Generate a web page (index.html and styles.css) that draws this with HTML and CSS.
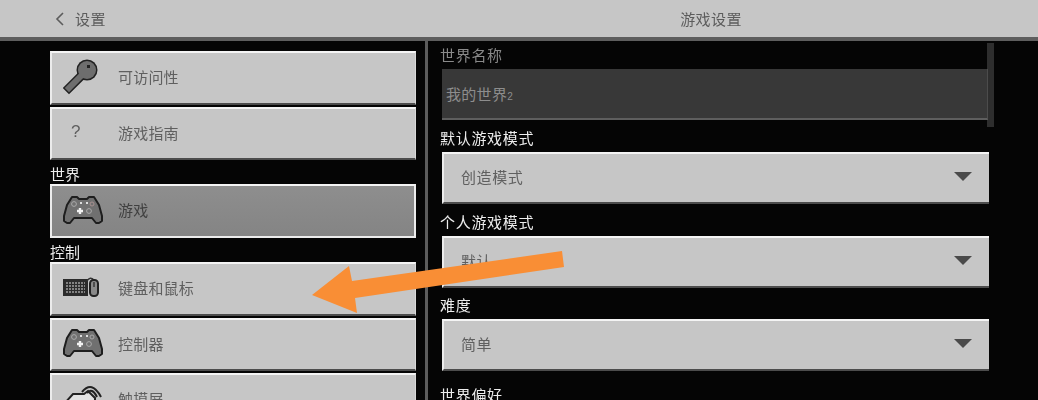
FILE: index.html
```html
<!DOCTYPE html>
<html lang="zh-CN">
<head>
<meta charset="utf-8">
<title>游戏设置</title>
<link rel="stylesheet" href="styles.css">
</head>
<body>
<div class="app">
  <header class="topbar">
    <div class="back">
      <svg class="chevron" width="10" height="16" viewBox="0 0 10 16"><path d="M8 2 L2 8 L8 14" fill="none" stroke="#5c5c5c" stroke-width="1.6"/></svg>
      <span>设置</span>
    </div>
    <div class="title">游戏设置</div>
  </header>
  <main class="content">
    <nav class="sidebar">
      <button class="item">
        <span class="slot">
          <svg width="40" height="40" viewBox="0 0 40 40">
            <path d="M17 20 L6 31" stroke="#222" stroke-width="9" stroke-linecap="square"/>
            <circle cx="24" cy="13" r="10.5" fill="#222"/>
            <path d="M17 20 L6 31" stroke="#6e6e6e" stroke-width="6" stroke-linecap="square"/>
            <circle cx="24" cy="13" r="9" fill="#6e6e6e"/>
            <rect x="24" y="8" width="3" height="3" fill="#222"/>
          </svg>
        </span>
        <span>可访问性</span>
      </button>
      <button class="item">
        <span class="slot slot-q">?</span>
        <span>游戏指南</span>
      </button>
      <div class="section">世界</div>
      <button class="item item-active">
        <span class="slot">
          <svg width="40" height="40" viewBox="0 0 40 40">
            <path class="pad" d="M9 7 H14 L16 9 H24 L26 7 H31 L36 15 L39 26 V31 L36 33 H33 L29 28 H11 L7 33 H4 L1 31 V26 L4 15 Z"/>
            <path d="M14 21 H20 M17 18 V24" stroke="#f2f2f2" stroke-width="2.4"/>
            <circle cx="11" cy="14" r="2.4" fill="none" stroke="#aaa"/>
            <circle cx="26" cy="21" r="2.4" fill="none" stroke="#aaa"/>
            <rect x="17" y="12" width="2" height="2" fill="#ddd"/>
            <rect x="23" y="12" width="2" height="2" fill="#ddd"/>
            <circle cx="29" cy="14" r="2" fill="none" stroke="#a89090"/>
          </svg>
        </span>
        <span>游戏</span>
      </button>
      <div class="section section-b">控制</div>
      <button class="item">
        <span class="slot">
          <svg width="40" height="40" viewBox="0 0 40 40">
            <rect x="0" y="11" width="25" height="17" fill="#2b2b2b"/>
            <path d="M3 15 H22 M3 18 H22 M3 21 H22 M3 24 H22" stroke="#828282" stroke-width="1.8" stroke-dasharray="2 1"/>
            <path d="M24 13 Q27 8 31 12" fill="none" stroke="#333" stroke-width="1.4"/>
            <rect x="27" y="12" width="8" height="16" rx="3.5" fill="#8a8a8a" stroke="#222" stroke-width="2"/>
            <path d="M31 14 V19" stroke="#333" stroke-width="1.4"/>
          </svg>
        </span>
        <span>键盘和鼠标</span>
      </button>
      <button class="item">
        <span class="slot">
          <svg width="40" height="40" viewBox="0 0 40 40">
            <path class="pad" d="M9 7 H14 L16 9 H24 L26 7 H31 L36 15 L39 26 V31 L36 33 H33 L29 28 H11 L7 33 H4 L1 31 V26 L4 15 Z"/>
            <path d="M14 21 H20 M17 18 V24" stroke="#f2f2f2" stroke-width="2.4"/>
            <circle cx="11" cy="14" r="2.4" fill="none" stroke="#aaa"/>
            <circle cx="26" cy="21" r="2.4" fill="none" stroke="#aaa"/>
            <rect x="17" y="12" width="2" height="2" fill="#ddd"/>
            <rect x="23" y="12" width="2" height="2" fill="#ddd"/>
            <circle cx="29" cy="14" r="2" fill="none" stroke="#aaa"/>
          </svg>
        </span>
        <span>控制器</span>
      </button>
      <button class="item">
        <span class="slot">
          <svg width="40" height="40" viewBox="0 0 40 40">
            <path d="M1 25 L10 15 H21 L25 12 L32 19 V32 H1 Z" fill="#e2e2e2" stroke="#222" stroke-width="2"/>
            <path d="M19 13 Q29 1 38 18" fill="none" stroke="#222" stroke-width="2"/>
            <path d="M24 14 Q29 8 34 18" fill="none" stroke="#222" stroke-width="2"/>
          </svg>
        </span>
        <span>触摸屏</span>
      </button>
    </nav>
    <div class="divider"></div>
    <section class="panel">
      <div class="scrollbar"></div>
      <div class="group">
        <div class="label label-dim">世界名称</div>
        <div class="field">我的世界<span class="small">2</span></div>
      </div>
      <div class="group">
        <div class="label">默认游戏模式</div>
        <div class="select"><span>创造模式</span><i class="caret"></i></div>
      </div>
      <div class="group">
        <div class="label">个人游戏模式</div>
        <div class="select"><span>默认</span><i class="caret"></i></div>
      </div>
      <div class="group">
        <div class="label">难度</div>
        <div class="select"><span>简单</span><i class="caret"></i></div>
      </div>
      <div class="group group-last">
        <div class="label">世界偏好</div>
      </div>
    </section>
  </main>
  <svg class="arrow" width="1038" height="400" viewBox="0 0 1038 400">
    <path d="M312 295 L349 266 L352 281 L562 251 L564 267 L355 298 L357 313 Z" fill="#f98e35"/>
  </svg>
</div>
</body>
</html>
```
FILE: styles.css
```css
* { box-sizing: border-box; }
html, body { margin: 0; padding: 0; height: 100%; overflow: hidden; background: #050505; }
body { font-family: "Noto Sans CJK SC", "Liberation Sans", sans-serif; font-size: 15px; }

.app { position: relative; width: 1038px; height: 400px; overflow: hidden; filter: blur(0.5px); }

.topbar {
  display: grid;
  grid-template-columns: 428px 566px;
  height: 41px;
  background: #c6c6c6;
  border-bottom: 4px solid #5e5e5e;
  color: #5c5c5c;
  line-height: 37px;
}
.back { display: flex; align-items: center; padding-left: 55px; gap: 10px; letter-spacing: .4px; }
.title { text-align: center; letter-spacing: .4px; }

.content { display: flex; height: 359px; padding-left: 50px; }

.sidebar { width: 366px; padding-top: 10px; display: flex; flex-direction: column; flex: none; }
.item {
  display: flex;
  align-items: center;
  flex: none;
  width: 100%;
  height: 53.5px;
  margin: 0 0 2px;
  padding: 0 0 2px 11px;
  background: #c6c6c6;
  border: 0;
  border-top: 2px solid #f4f4f4;
  border-left: 2px solid #ececec;
  border-right: 1px solid #d8d8d8;
  border-bottom: 2px solid #4c4c4c;
  color: #5f5f5f;
  font: inherit;
  letter-spacing: .2px;
  text-align: left;
}
.item-active {
  background: linear-gradient(#8e8e8e, #848484);
  border-bottom-color: #ececec;
  border-right: 2px solid #ececec;
  color: #404040;
}
.slot { flex: none; width: 40px; height: 40px; margin-right: 15px; display: block; }
.slot svg { display: block; }
.slot-q { line-height: 40px; padding-left: 8px; font-family: "Liberation Sans", sans-serif; font-size: 17px; }
.pad { fill: #707070; stroke: #1e1e1e; stroke-width: 2; stroke-linejoin: bevel; }

.section { height: 22px; line-height: 24px; color: #ededed; flex: none; }
.section-b { height: 22.5px; line-height: 23px; }

.divider { width: 3px; margin-left: 9px; background: #5c5c5c; flex: none; }

.panel {
  position: relative;
  width: 566px;
  padding: 6px 0 0 12px;
  display: flex;
  flex-direction: column;
  gap: 9.75px;
}
.scrollbar { position: absolute; left: 559px; top: 2px; width: 7px; height: 84px; background: #2e2e2e; }
.group { flex: none; }
.group-last { margin-top: 6px; }
.label { height: 22px; line-height: 15px; color: #ededed; letter-spacing: .7px; }
.label-dim { color: #8a8a8a; }
.field {
  position: relative;
  margin-left: 2px;
  width: 546px;
  height: 51px;
  padding: 13px 0 0 4px;
  line-height: 24px;
  background: #383838;
  border-bottom: 2px solid #5e5e5e;
  border-right: 1px solid #4c4c4c;
  color: #8d8d8d;
  letter-spacing: .3px;
}
.small { font-family: "Liberation Sans", sans-serif; font-size: 10px; }
.select {
  display: flex;
  align-items: center;
  justify-content: space-between;
  margin-left: 2px;
  width: 547px;
  height: 52px;
  padding: 0 17px 3px 17px;
  background: #c6c6c6;
  border-top: 2px solid #f4f4f4;
  border-left: 2px solid #ececec;
  border-bottom: 2px solid #4c4c4c;
  color: #5f5f5f;
  letter-spacing: .6px;
}
.caret {
  width: 0;
  height: 0;
  border-left: 9px solid transparent;
  border-right: 9px solid transparent;
  border-top: 9px solid #4a4a4a;
}
.arrow { position: absolute; left: 0; top: 0; pointer-events: none; }
```
